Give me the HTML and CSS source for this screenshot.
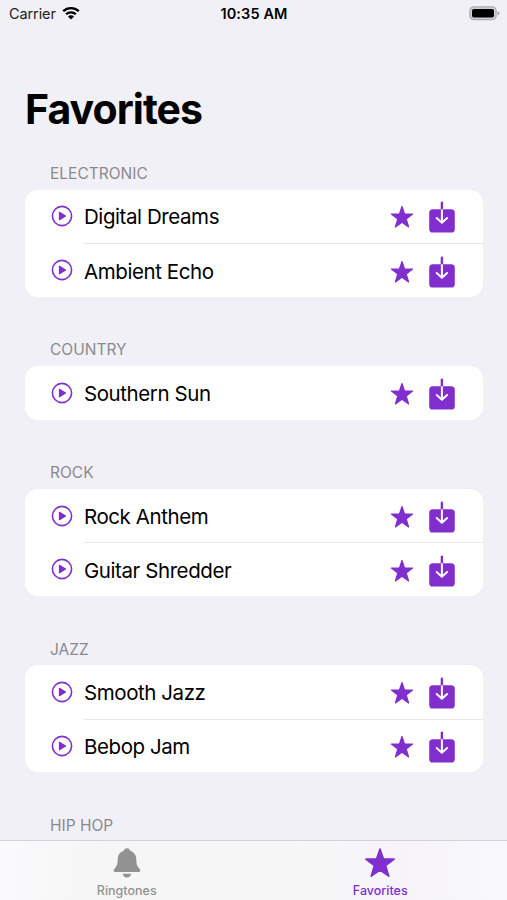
FILE: index.html
```html
<!DOCTYPE html>
<html lang="en">
<head>
<meta charset="utf-8">
<title>Favorites</title>
<link rel="stylesheet" href="styles.css">
</head>
<body>
<svg class="defs" width="0" height="0" aria-hidden="true">
  <symbol id="play" viewBox="0 0 22 22">
    <circle cx="11" cy="11" r="9.6" fill="none" stroke="currentColor" stroke-width="1.6"/>
    <path d="M7.900 7.300v7.400q0 .9.900.5l6-3.700q.7-.5 0-1L8.800 6.800Q7.900 6.400 7.900 7.300z" fill="currentColor"/>
  </symbol>
  <symbol id="star" viewBox="0 0 24 24">
    <path d="M12 1.500 14.600 9.100H22.600L16.200 13.900 18.600 21.900 12 17.300 5.400 21.900 7.800 13.900 1.400 9.100H9.400z" fill="currentColor" stroke="currentColor" stroke-width="1.200" stroke-linejoin="round"/>
  </symbol>
  <symbol id="save" viewBox="0 0 26 32">
    <rect x=".2" y="8.300" width="25.600" height="23.200" rx="3.600" fill="currentColor"/>
    <path d="M12.900 1.800v6.500" stroke="currentColor" stroke-width="2.400" stroke-linecap="round"/>
    <path d="M12.900 8.300V21" stroke="#fff" stroke-width="2"/>
    <path d="M7.700 17l5.200 4.800 5.200-4.800" fill="none" stroke="#fff" stroke-width="2" stroke-linecap="round" stroke-linejoin="round"/>
  </symbol>
</svg>
<div class="screen">
  <header class="status">
    <div class="carrier"><span>Carrier</span>
      <svg class="wifi" viewBox="0 0 18 14"><path d="M1.200 5.200a11.200 11.200 0 0 1 15.600 0M4.100 8.300a7 7 0 0 1 9.800 0" fill="none" stroke="#000" stroke-width="2.300"/><path d="M9 13.500 5.900 10.500a4.400 4.400 0 0 1 6.200 0z"/></svg>
    </div>
    <time>10:35 AM</time>
    <svg class="battery" viewBox="0 0 31 15"><rect x=".9" y=".9" width="26.200" height="12.800" rx="4" fill="#d0d0d4" stroke="#acacb0" stroke-width="1.300"/><rect x="3" y="3" width="22" height="8.600" rx="1.800"/><path d="M28.500 5.200q2 .6 2 2.100t-2 2.100z" fill="#a9a9ad"/></svg>
  </header>
  <main class="content">
    <h1>Favorites</h1>
    <section>
      <h2>ELECTRONIC</h2>
      <ul>
        <li><svg class="play"><use href="#play"/></svg><div class="row"><span>Digital Dreams</span><svg class="star"><use href="#star"/></svg><svg class="save"><use href="#save"/></svg></div></li>
        <li><svg class="play"><use href="#play"/></svg><div class="row"><span>Ambient Echo</span><svg class="star"><use href="#star"/></svg><svg class="save"><use href="#save"/></svg></div></li>
      </ul>
    </section>
    <section>
      <h2>COUNTRY</h2>
      <ul>
        <li><svg class="play"><use href="#play"/></svg><div class="row"><span>Southern Sun</span><svg class="star"><use href="#star"/></svg><svg class="save"><use href="#save"/></svg></div></li>
      </ul>
    </section>
    <section>
      <h2>ROCK</h2>
      <ul>
        <li><svg class="play"><use href="#play"/></svg><div class="row"><span>Rock Anthem</span><svg class="star"><use href="#star"/></svg><svg class="save"><use href="#save"/></svg></div></li>
        <li><svg class="play"><use href="#play"/></svg><div class="row"><span>Guitar Shredder</span><svg class="star"><use href="#star"/></svg><svg class="save"><use href="#save"/></svg></div></li>
      </ul>
    </section>
    <section>
      <h2>JAZZ</h2>
      <ul>
        <li><svg class="play"><use href="#play"/></svg><div class="row"><span>Smooth Jazz</span><svg class="star"><use href="#star"/></svg><svg class="save"><use href="#save"/></svg></div></li>
        <li><svg class="play"><use href="#play"/></svg><div class="row"><span>Bebop Jam</span><svg class="star"><use href="#star"/></svg><svg class="save"><use href="#save"/></svg></div></li>
      </ul>
    </section>
    <section>
      <h2>HIP HOP</h2>
    </section>
  </main>
  <nav class="tabs">
    <a class="tab"><svg class="tab-icon" viewBox="0 0 32 32"><path d="M16 1.300c-1.600 0-2.600.9-3 2.200C8.700 5 6.800 8.300 6.700 12.600 6.600 17.800 5.800 19 4 21.200c-1 1.100-1.400 1.700-1.400 2.400 0 .8.600 1.300 1.500 1.300h23.800c.9 0 1.500-.5 1.500-1.300 0-.7-.4-1.300-1.400-2.400-1.800-2.200-2.600-3.400-2.700-8.600-.1-4.300-2-7.600-6.300-9.100-.4-1.300-1.400-2.200-3-2.200zM11.800 26.800h8.400c-.2 2.200-2 3.800-4.200 3.800s-4-1.600-4.200-3.800z" fill="currentColor"/></svg><span>Ringtones</span></a>
    <a class="tab active"><svg class="tab-icon"><use href="#star"/></svg><span>Favorites</span></a>
  </nav>
</div>
</body>
</html>
```

FILE: styles.css
```css
* { box-sizing: border-box; }
body {
  margin: 0;
  background: #f1f0f6;
  color: #000;
  font-family: Inter, "Liberation Sans", sans-serif;
}
.defs { display: block; }
.screen {
  width: 507px;
  height: 900px;
  display: flex;
  flex-direction: column;
  overflow: hidden;
}
svg { display: block; flex: none; }
.status {
  flex: none;
  height: 26px;
  display: grid;
  grid-template-columns: 1fr auto 1fr;
  align-items: center;
  padding: 0 7px 0 9px;
  font-size: 14.500px;
}
.carrier { display: flex; align-items: center; gap: 6px; color: #222; letter-spacing: -0.1px; }
.wifi { width: 18px; height: 14px; }
.status time { font-weight: 600; letter-spacing: 0.1px; margin-right: 1px; }
.battery { width: 31px; height: 15px; justify-self: end; }
.content {
  flex: 1;
  min-height: 0;
  overflow: hidden;
  padding: 58px 24.500px 0 25px;
}
h1 {
  margin: 0;
  height: 50px;
  line-height: 50px;
  font-size: 41px;
  font-weight: 700;
  letter-spacing: -0.950px;
}
section { padding-top: 29.500px; margin-bottom: 13px; }
section:first-of-type { padding-top: 29px; }
h2 {
  margin: 0;
  padding: 0 25px;
  height: 26.600px;
  line-height: 22px;
  font-size: 15.500px;
  font-weight: 400;
  color: #8a8a8e;
}
ul {
  margin: 0;
  padding: 0;
  list-style: none;
  background: #fff;
  border-radius: 13px;
}
li {
  height: 53.670px;
  display: flex;
  align-items: center;
  padding-left: 25.700px;
}
.play { width: 22px; height: 22px; color: #812ecf; }
.row {
  flex: 1;
  height: 100%;
  display: flex;
  align-items: center;
  margin-left: 11.300px;
  padding: 1px 28px 0 0;
  font-size: 20.500px;
  letter-spacing: -0.420px;
}
.row span { flex: 1; }
li + li .row { border-top: 1px solid #e9e9ec; }
.star { width: 24px; height: 24px; color: #812ecf; margin: 1px 14.500px 0 0; }
.save { width: 26px; height: 32px; color: #812ecf; margin-top: 1px; }
.tabs {
  flex: none;
  height: 60px;
  display: flex;
  border-top: 1px solid #d3d3d6;
  background: linear-gradient(90deg, #fafafc, #f6f6f6 20%, #f7f7f7 60%, #f6f4f9 80%, #f9f9fb);
}
.tab {
  flex: 1;
  display: flex;
  flex-direction: column;
  align-items: center;
  padding-top: 6px;
  gap: 4px;
  color: #929292;
  font-size: 12.500px;
  font-weight: 500;
  line-height: 16px;
}
.tab-icon { width: 32px; height: 32px; }
.active { color: #812ecf; }
```
